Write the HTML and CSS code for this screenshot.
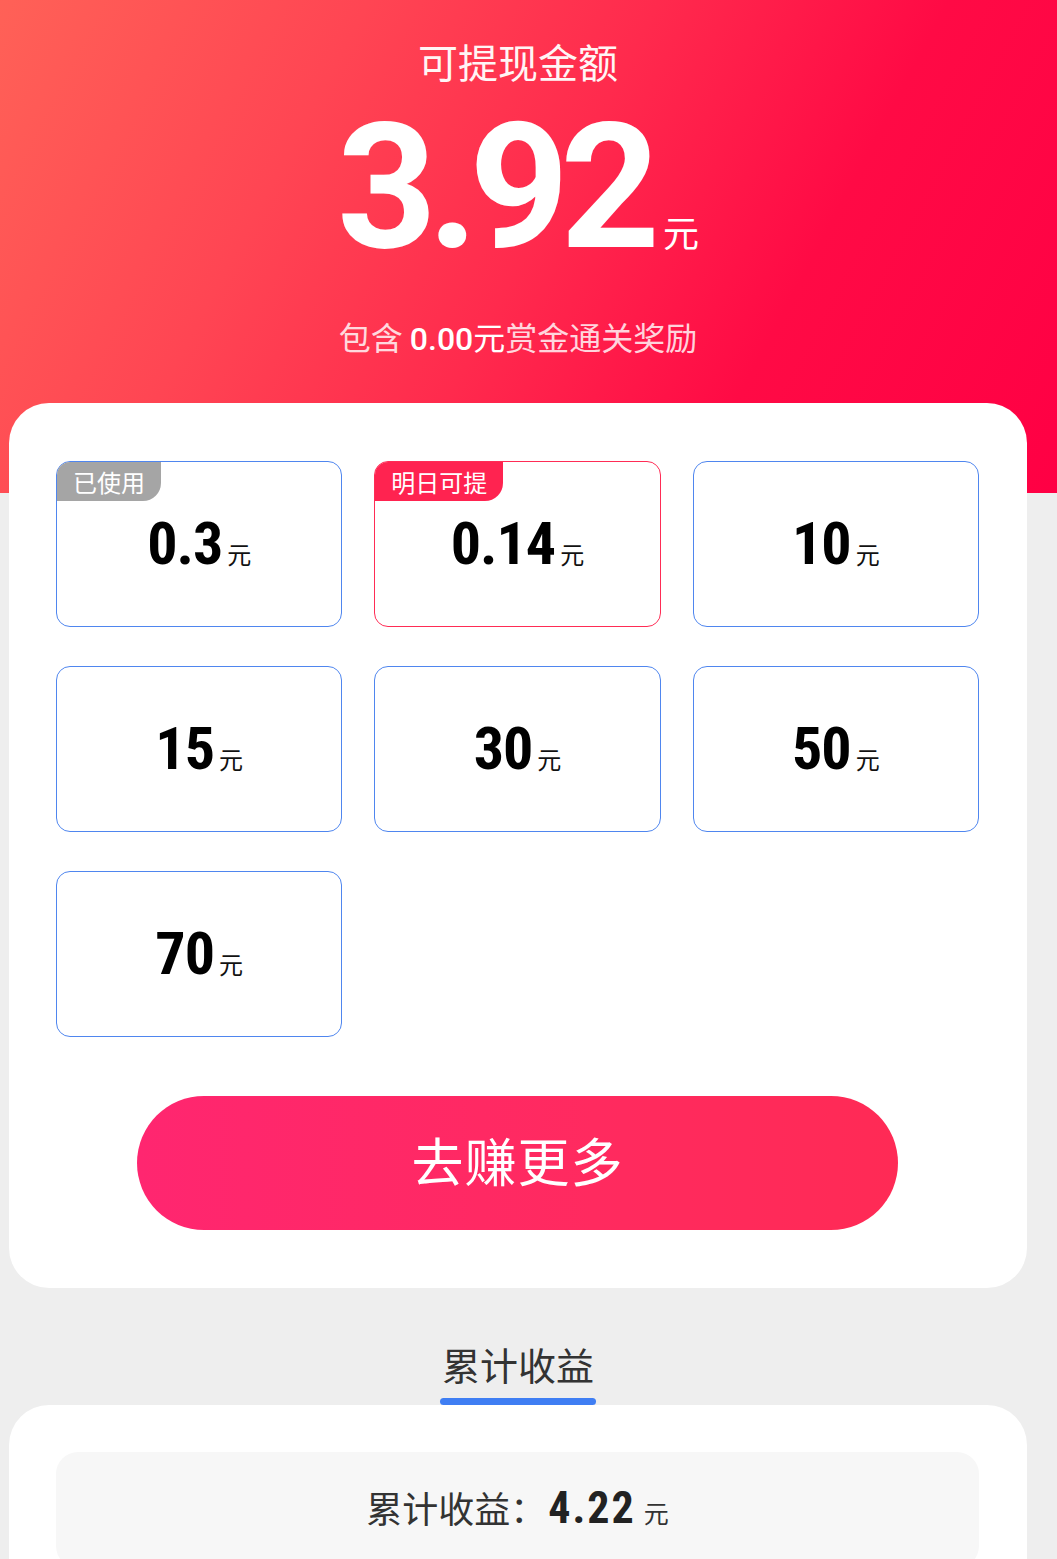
FILE: index.html
```html
<!DOCTYPE html>
<html lang="zh">
<head>
<meta charset="utf-8">
<title>可提现金额</title>
<link rel="stylesheet" href="styles.css">
</head>
<body>
<header class="hero">
  <div class="hero-title">可提现金额</div>
  <div class="hero-amount"><span class="hero-num">3.92</span><span class="hero-unit">元</span></div>
  <div class="hero-sub">包含 <span class="hero-sub-strong"><span class="hero-sub-num">0.00</span>元</span>赏金通关奖励</div>
</header>

<main class="wrap">
  <section class="card options">
    <div class="grid">
      <div class="opt">
        <span class="badge badge-used">已使用</span>
        <span class="opt-num">0.3</span><span class="opt-unit">元</span>
      </div>
      <div class="opt opt-red">
        <span class="badge badge-next">明日可提</span>
        <span class="opt-num">0.14</span><span class="opt-unit">元</span>
      </div>
      <div class="opt"><span class="opt-num">10</span><span class="opt-unit">元</span></div>
      <div class="opt"><span class="opt-num">15</span><span class="opt-unit">元</span></div>
      <div class="opt"><span class="opt-num">30</span><span class="opt-unit">元</span></div>
      <div class="opt"><span class="opt-num">50</span><span class="opt-unit">元</span></div>
      <div class="opt"><span class="opt-num">70</span><span class="opt-unit">元</span></div>
    </div>
    <div class="btn-row">
      <button class="btn">去赚更多</button>
    </div>
  </section>

  <div class="tab">
    <div class="tab-label">累计收益</div>
    <div class="tab-line"></div>
  </div>

  <section class="card total-card">
    <div class="total-box">
      <span class="total-label">累计收益：</span><span class="total-num">4.22</span><span class="total-unit">元</span>
    </div>
  </section>
</main>
</body>
</html>
```

FILE: styles.css
```css
* { box-sizing: border-box; }

html, body {
  margin: 0;
  padding: 0;
}

body {
  background: #eeeeee;
  font-family: "Noto Sans CJK SC", "Noto Sans", sans-serif;
  width: 1057px;
  overflow: hidden;
}

.hero {
  height: 493px;
  padding: 37px 21px 0 0;
  background: linear-gradient(118deg, #ff6157 0%, #ff4553 28%, #ff2a4d 50%, #ff0a45 72%, #ff0044 100%);
  color: #fff;
  text-align: center;
}

.hero-title {
  font-size: 40px;
  line-height: 48px;
  color: #fff5f5;
}

.hero-amount {
  height: 140px;
  margin-top: 33px;
  line-height: 140px;
  white-space: nowrap;
}

.hero-num {
  font-family: Roboto, "Noto Sans", sans-serif;
  font-weight: 700;
  font-size: 174px;
  letter-spacing: -9px;
}

.hero-unit {
  font-size: 36px;
  margin-left: 12px;
}

.hero-sub {
  margin-top: 58px;
  font-size: 32px;
  line-height: 40px;
  color: rgba(255, 255, 255, 0.82);
}

.hero-sub-strong {
  color: #fff;
}

.hero-sub-num {
  font-family: Roboto, "Noto Sans", sans-serif;
  font-weight: 500;
}

.wrap {
  margin: -90px 30px 0 9px;
}

.card {
  background: #fff;
  border-radius: 40px;
}

.options {
  padding: 58px 48px 58px 47px;
}

.grid {
  display: grid;
  grid-template-columns: repeat(3, 1fr);
  column-gap: 32px;
  row-gap: 39px;
}

.opt {
  position: relative;
  height: 166px;
  border: 1.5px solid #4f86ef;
  border-radius: 14px;
  display: flex;
  justify-content: center;
  align-items: baseline;
  padding-top: 47px;
  color: #000;
  overflow: hidden;
}

.opt-red {
  border-color: #ff2c55;
}

.opt-num {
  font-family: "Roboto Condensed", Roboto, sans-serif;
  font-weight: 700;
  font-size: 60px;
  line-height: 70px;
  letter-spacing: -1px;
}

.opt-unit {
  font-size: 24px;
  margin-left: 5px;
  color: #111;
}

.badge {
  position: absolute;
  left: 0;
  top: 0;
  height: 39px;
  padding: 0 16px;
  font-size: 24px;
  line-height: 39px;
  color: #fff;
  border-bottom-right-radius: 18px;
}

.badge-used {
  background: #a5a5a5;
}

.badge-next {
  background: #ff2350;
}

.btn-row {
  display: flex;
  justify-content: center;
  margin-top: 59px;
}

.btn {
  width: 761px;
  height: 134px;
  border: none;
  border-radius: 67px;
  background: linear-gradient(90deg, #ff2670 0%, #ff2a5f 60%, #ff2a55 100%);
  color: #fff;
  font-family: "Noto Sans CJK SC", sans-serif;
  font-size: 52px;
  line-height: 60px;
  letter-spacing: 1px;
  padding: 0 0 6px;
}

.tab {
  display: flex;
  flex-direction: column;
  align-items: center;
  padding-top: 52px;
}

.tab-label {
  font-size: 38px;
  line-height: 48px;
  color: #333;
}

.tab-line {
  width: 156px;
  height: 7px;
  margin-top: 10px;
  border-radius: 4px;
  background: #3f7ef3;
}

.total-card {
  padding: 47px 48px 40px 47px;
}

.total-box {
  height: 116px;
  background: #f7f7f7;
  border-radius: 22px;
  display: flex;
  justify-content: center;
  align-items: baseline;
  padding-top: 30px;
  color: #222;
}

.total-label {
  font-size: 36px;
  line-height: 50px;
  color: #333;
}

.total-num {
  font-family: "Roboto Condensed", Roboto, sans-serif;
  font-weight: 700;
  font-size: 44px;
  letter-spacing: 2px;
  margin-left: 2px;
}

.total-unit {
  font-size: 25px;
  margin-left: 8px;
  color: #333;
}
```
